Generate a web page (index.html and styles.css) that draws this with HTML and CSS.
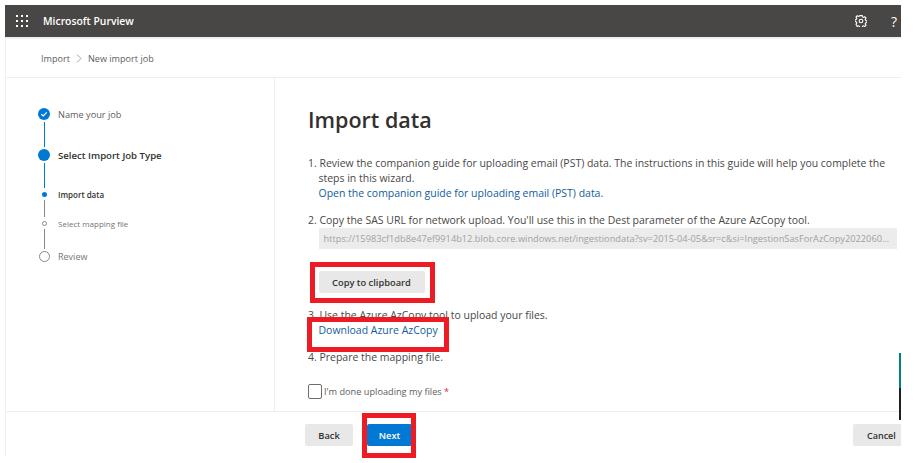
FILE: index.html
```html
<!DOCTYPE html>
<html lang="en">
<head>
<meta charset="utf-8">
<title>Import data - Microsoft Purview</title>
<link rel="stylesheet" href="styles.css">
</head>
<body>
<div class="frame">
  <header class="topbar">
    <svg class="waffle" width="12" height="12" viewBox="0 0 12 12" fill="#fff"><rect x="0" y="0" width="2" height="2"/><rect x="5" y="0" width="2" height="2"/><rect x="10" y="0" width="2" height="2"/><rect x="0" y="5" width="2" height="2"/><rect x="5" y="5" width="2" height="2"/><rect x="10" y="5" width="2" height="2"/><rect x="0" y="10" width="2" height="2"/><rect x="5" y="10" width="2" height="2"/><rect x="10" y="10" width="2" height="2"/></svg>
    <span class="brand">Microsoft Purview</span>
    <span class="spacer"></span>
    <svg class="gear" width="12" height="12" viewBox="0 0 12 12" fill="none" stroke="#fff" stroke-width="1.100"><circle cx="6" cy="6" r="1.800"/><path d="M4.800.6h2.400l.3 1.400 1 .5 1.300-.7 1.200 1.300-.8 1.300.4 1 1.400.4v1.700l-1.400.4-.4 1 .8 1.300-1.200 1.300-1.300-.7-1 .5-.3 1.400H4.800l-.3-1.400-1-.5-1.300.7L1 9.200l.8-1.300-.4-1-1.400-.4V4.800l1.400-.4.400-1L1 2.100l1.200-1.300 1.300.7 1-.5z"/></svg>
    <span class="help">?</span>
  </header>
  <nav class="crumbs">
    <span>Import</span>
    <svg class="chev" width="6" height="9" viewBox="0 0 6 9" fill="none" stroke="#8a8886" stroke-width="0.8"><path d="M1 .5l4 4-4 4"/></svg>
    <span>New import job</span>
  </nav>
  <div class="body">
    <aside class="side">
      <ol class="steps">
        <li class="step step-first">
          <span class="mark"><svg class="check" width="12" height="12" viewBox="0 0 12 12"><circle cx="6" cy="6" r="6" fill="#0078d4"/><path d="M3.300 6.200l1.900 1.800 3.500-3.700" fill="none" stroke="#fff" stroke-width="1.200"/></svg></span>
          <span class="label">Name your job</span>
        </li>
        <li class="line blue tall"></li>
        <li class="step">
          <span class="mark"><i class="dot big"></i></span>
          <span class="label strong">Select Import Job Type</span>
        </li>
        <li class="line blue short"></li>
        <li class="step small">
          <span class="mark"><i class="dot tiny"></i></span>
          <span class="label sub strong">Import data</span>
        </li>
        <li class="line grey mid"></li>
        <li class="step small">
          <span class="mark"><i class="dot ring-tiny"></i></span>
          <span class="label sub muted">Select mapping file</span>
        </li>
        <li class="line grey mid2"></li>
        <li class="step">
          <span class="mark"><i class="dot ring"></i></span>
          <span class="label muted review">Review</span>
        </li>
      </ol>
    </aside>
    <main class="content">
      <h1>Import data</h1>
      <p class="item first">1. Review the companion guide for uploading email (PST) data. The instructions in this guide will help you complete the<br><span class="ind">steps in this wizard.</span><br><a class="ind" href="#">Open the companion guide for uploading email (PST) data.</a></p>
      <p class="item second">2. Copy the SAS URL for network upload. You'll use this in the Dest parameter of the Azure AzCopy tool.</p>
      <div class="url">https://15983cf1db8e47ef9914b12.blob.core.windows.net/ingestiondata?sv=2015-04-05&amp;sr=c&amp;si=IngestionSasForAzCopy2022060...</div>
      <div class="copy-row"><button class="btn copy">Copy to clipboard</button></div>
      <p class="item third">3. Use the Azure AzCopy tool to upload your files.<br><a class="ind" href="#">Download Azure AzCopy</a></p>
      <p class="item fourth">4. Prepare the mapping file.</p>
      <label class="done"><span class="box"></span><span>I'm done uploading my files <b class="req">*</b></span></label>
    </main>
  </div>
  <footer class="foot">
    <button class="btn back">Back</button>
    <button class="btn next">Next</button>
    <span class="spacer"></span>
    <button class="btn cancel">Cancel</button>
  </footer>
  <div class="scroll-mark"></div>
</div>
<div class="red r1"></div>
<div class="red r2"></div>
<div class="red r3"></div>
</body>
</html>
```
FILE: styles.css
```css
* { box-sizing: border-box; }
html, body { margin: 0; padding: 0; height: 100%; background: #fff; overflow: hidden; }
body { font-family: "Open Sans", "Noto Sans", sans-serif; color: #323130; font-size: 10.47px; position: relative; }
.frame { position: relative; margin: 5px 0 0 5px; width: 896px; height: 452px; border-left: 1px solid #f0f0f0; display: flex; flex-direction: column; }
.topbar { height: 32px; margin-left: -1px; background: #494745; color: #fff; display: flex; align-items: center; padding-left: 11px; flex: none; }
.waffle { margin-right: 15px; }
.brand { font-size: 10.400px; font-weight: 600; }
.spacer { flex: 1; }
.gear { margin-right: 24px; }
.help { font-size: 14px; width: 10px; color: #fff; }
.crumbs { height: 41px; border-top: 2px solid #f0f0f0; border-bottom: 1px solid #eee; display: flex; align-items: center; padding-left: 35px; gap: 6px; font-size: 9.100px; color: #605e5c; flex: none; }
.body { display: flex; height: 334px; flex: none; border-bottom: 1px solid #eee; }
.side { width: 269px; border-right: 1px solid #eee; padding-top: 30px; padding-left: 32px; flex: none; }
.steps { list-style: none; margin: 0; padding: 0; }
.step { display: flex; align-items: center; height: 12px; }
.mark { width: 12px; height: 12px; display: flex; align-items: center; justify-content: center; flex: none; margin-right: 8px; }
.check { display: block; }
.label { white-space: nowrap; font-size: 9.200px; color: #605e5c; }
.label.strong { font-weight: 600; color: #323130; font-size: 9.600px; }
.label.sub { font-size: 8px; }
.label.sub.strong { font-size: 8px; }
.label.muted { color: #767472; }
.label.review { font-size: 9px; }
.dot { display: block; border-radius: 50%; }
.big { width: 12px; height: 12px; background: #0078d4; }
.tiny { width: 5px; height: 5px; background: #0078d4; }
.ring-tiny { width: 5px; height: 5px; border: 1.300px solid #8a8886; }
.ring { width: 11px; height: 11px; border: 1.300px solid #8a8886; }
.line { width: 1px; margin-left: 5.500px; }
.blue { background: #0078d4; width: 1.300px; }
.grey { background: #8a8886; }
.tall { height: 25px; margin-top: 2px; margin-bottom: 2px; }
.short { height: 25px; margin-top: 2px; margin-bottom: 0; }
.mid { height: 17px; margin-top: 0; margin-bottom: 0; }
.mid2 { height: 20px; margin-top: 0; margin-bottom: 1px; }
.content { flex: 1; padding-left: 33px; min-width: 0; }
h1 { margin: 27px 0 0; font-size: 21.500px; line-height: 29px; font-weight: 600; color: #323130; }
.item { margin: 0; line-height: 15px; white-space: nowrap; color: #4a4846; }
.first { margin-top: 22px; }
.second { margin-top: 12px; }
.third { margin-top: 15px; line-height: 15px; }
.fourth { margin-top: 12px; }
.ind { margin-left: 10.500px; }
a { color: #0f5e9c; text-decoration: none; }
.url { margin: 0 0 0 10.500px; width: 578px; height: 21px; line-height: 21px; background: #ececec; color: #a3a19f; padding-left: 5px; white-space: nowrap; overflow: hidden; font-size: 9.250px; }
.copy-row { margin-top: 22px; margin-left: 10.500px; }
.btn { font-family: inherit; border: 0; border-radius: 2px; font-size: 9.300px; font-weight: 600; color: #323130; background: #e8e8e8; padding: 0; height: 22px; }
.copy { width: 106px; }
.done { margin-top: 19px; display: flex; align-items: center; height: 15px; color: #605e5c; font-size: 9.200px; }
.box { width: 14px; height: 15px; border: 1px solid #6f6d6b; border-radius: 2px; margin: 0 2px 0 0; flex: none; }
.req { color: #d13438; font-weight: 400; }
.foot { display: flex; padding-left: 299px; padding-top: 12px; gap: 14px; }
.back { width: 48px; }
.next { width: 45px; background: #0078d4; color: #fff; }
.cancel { width: 48px; text-align: left; padding-left: 14px; font-size: 9px; border-radius: 2px 0 0 2px; }
.scroll-mark { position: absolute; right: 0; top: 348px; width: 2px; height: 67px; background: linear-gradient(#008080 0 52%, #1f1f1f 52% 100%); }
.red { position: absolute; border: 5px solid #ed1c24; }
.r1 { left: 310px; top: 262px; width: 125px; height: 41px; }
.r2 { left: 307px; top: 317px; width: 142px; height: 35px; }
.r3 { left: 362px; top: 413px; width: 54px; height: 45px; }
```
